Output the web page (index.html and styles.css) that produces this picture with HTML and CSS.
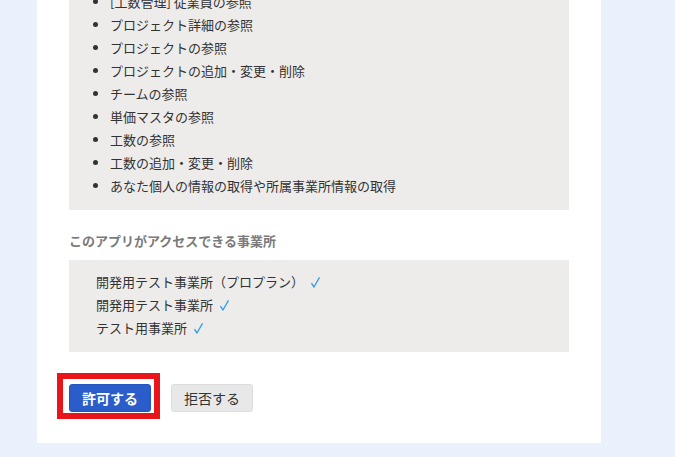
FILE: index.html
```html
<!DOCTYPE html>
<html lang="ja">
<head>
<meta charset="utf-8">
<link rel="stylesheet" href="styles.css">
</head>
<body>
<div class="card">
  <div class="box perms">
    <ul class="perm-list">
      <li>[工数管理] 従業員の参照</li>
      <li>プロジェクト詳細の参照</li>
      <li>プロジェクトの参照</li>
      <li>プロジェクトの追加・変更・削除</li>
      <li>チームの参照</li>
      <li>単価マスタの参照</li>
      <li>工数の参照</li>
      <li>工数の追加・変更・削除</li>
      <li>あなた個人の情報の取得や所属事業所情報の取得</li>
    </ul>
  </div>
  <h3 class="heading">このアプリがアクセスできる事業所</h3>
  <div class="box offices">
    <div class="office">開発用テスト事業所（プロプラン）<svg class="check" viewBox="0 0 9 11" width="9" height="11"><path d="M0.8 6.6 L3 10 L8.2 0.8" fill="none" stroke="#3aa0e6" stroke-width="1.4" stroke-linecap="round" stroke-linejoin="round"/></svg></div>
    <div class="office">開発用テスト事業所<svg class="check" viewBox="0 0 9 11" width="9" height="11"><path d="M0.8 6.6 L3 10 L8.2 0.8" fill="none" stroke="#3aa0e6" stroke-width="1.4" stroke-linecap="round" stroke-linejoin="round"/></svg></div>
    <div class="office">テスト用事業所<svg class="check" viewBox="0 0 9 11" width="9" height="11"><path d="M0.8 6.6 L3 10 L8.2 0.8" fill="none" stroke="#3aa0e6" stroke-width="1.4" stroke-linecap="round" stroke-linejoin="round"/></svg></div>
  </div>
  <div class="actions">
    <div class="allow-wrap">
      <button class="btn btn-primary">許可する</button>
      <span class="highlight"></span>
    </div>
    <button class="btn btn-secondary">拒否する</button>
  </div>
</div>
</body>
</html>
```
FILE: styles.css
```css
html, body {
  margin: 0;
  padding: 0;
}
body {
  background: #eaf1fc;
  font-family: "Noto Sans CJK JP", "Noto Sans", sans-serif;
  font-size: 13px;
  color: #333;
  height: 457px;
  overflow: hidden;
}
.card {
  background: #fff;
  width: 500px;
  margin: -22px 0 0 37px;
  padding: 0 32px 31px 32px;
}
.box {
  background: #eeeceb;
}
.perms {
  padding: 12px 0 13px 0;
}
.perm-list {
  margin: 0;
  padding: 0 0 0 41px;
  list-style: disc;
}
.perm-list li {
  line-height: 23px;
  height: 23px;
}
.heading {
  margin: 21px 0 0 0;
  height: 29px;
  line-height: 20px;
  font-size: 13px;
  font-weight: bold;
  color: #7a7a7a;
}
.offices {
  padding: 10px 0 13px 27px;
}
.office {
  line-height: 23px;
  height: 23px;
  white-space: pre;
}
.check {
  display: inline-block;
  vertical-align: -1px;
  margin-left: 7px;
}
.actions {
  display: flex;
  align-items: center;
  gap: 20px;
  margin-top: 32px;
}
.allow-wrap {
  position: relative;
  display: flex;
}
.btn {
  width: 82px;
  height: 28px;
  border-radius: 3px;
  font-family: "Noto Sans CJK JP", "Noto Sans", sans-serif;
  font-size: 14px;
  padding: 0;
  line-height: 26px;
  cursor: pointer;
}
.btn-primary {
  background: #2a5dc9;
  border: 1px solid #2556c0;
  color: #fff;
  font-weight: bold;
}
.btn-secondary {
  background: #e8e8e8;
  border: 1px solid #dcdcdc;
  color: #333;
}
.highlight {
  position: absolute;
  left: -12px;
  top: -11px;
  width: 91px;
  height: 34px;
  border: 6px solid #e8161b;
  pointer-events: none;
}
```
